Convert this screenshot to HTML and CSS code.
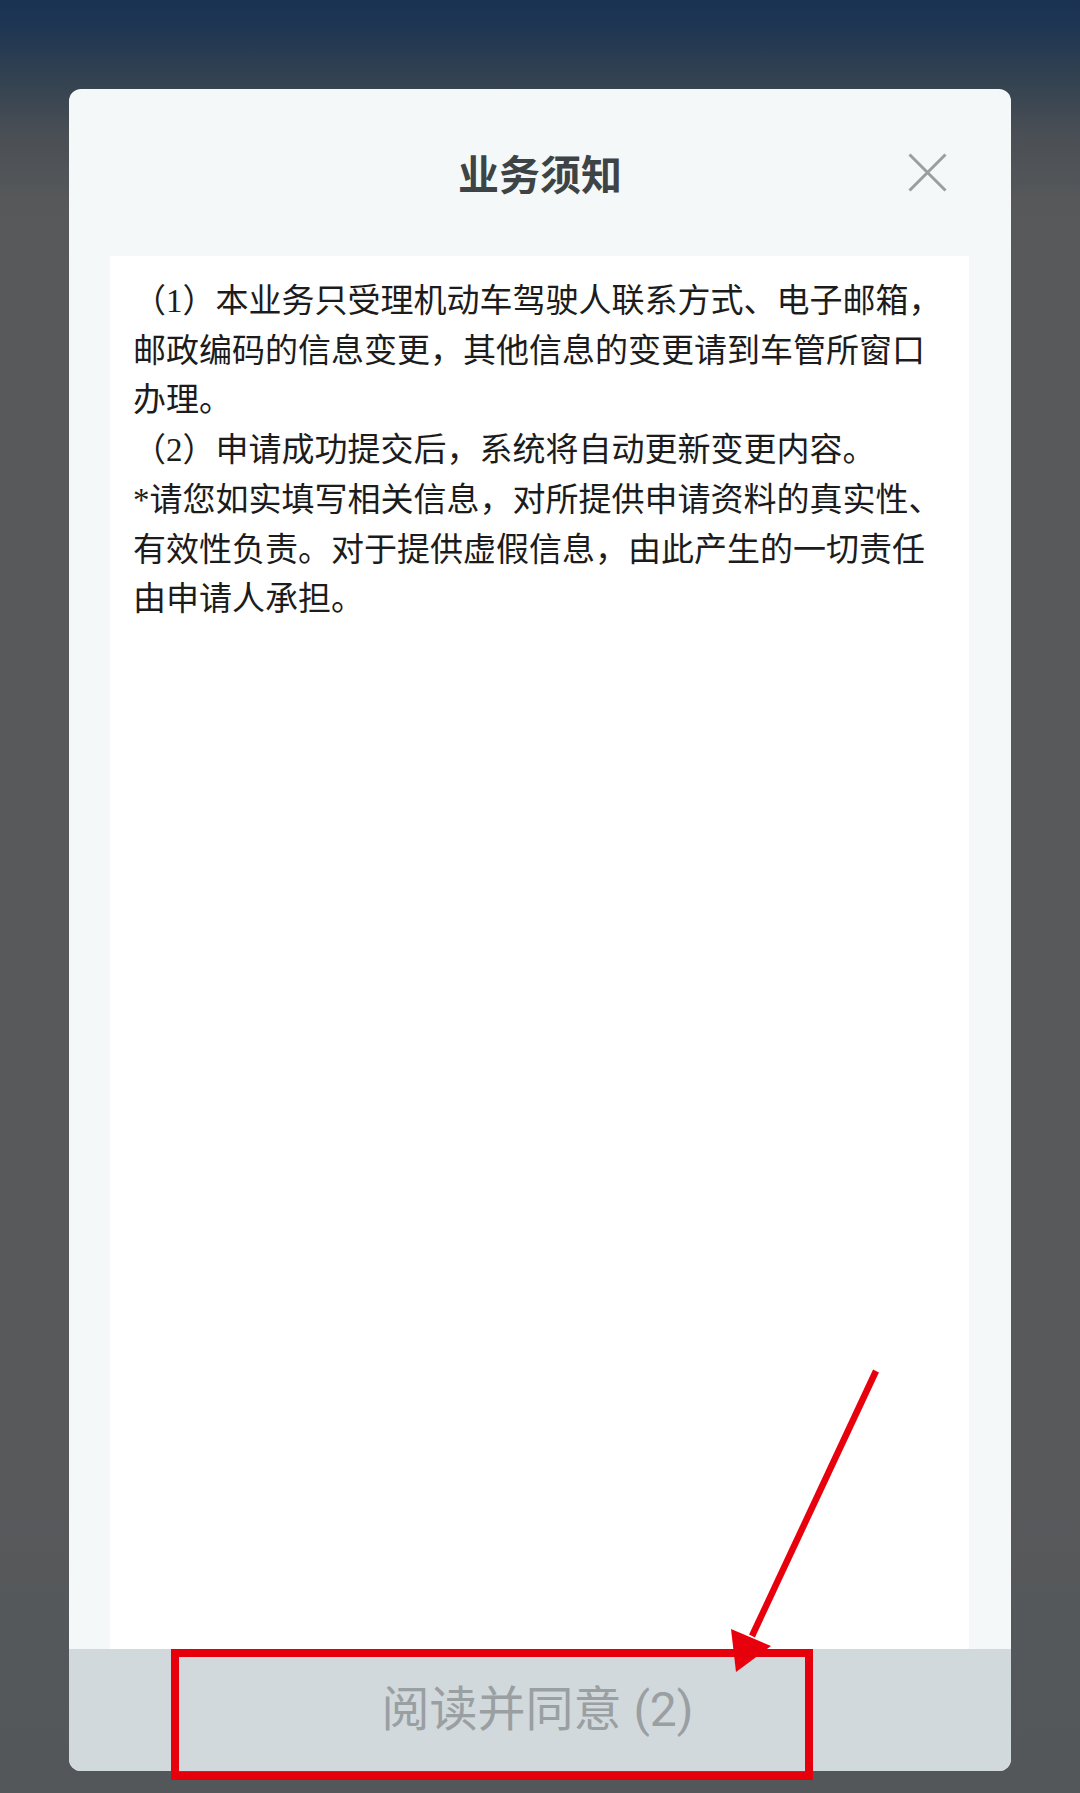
FILE: index.html
```html
<!DOCTYPE html>
<html lang="zh-CN">
<head>
<meta charset="utf-8">
<title>业务须知</title>
<link rel="stylesheet" href="styles.css">
</head>
<body>
<div class="screen">
  <div class="modal">
    <div class="modal-header">
      <span class="spacer"></span>
      <h1 class="title">业务须知</h1>
      <button class="close" aria-label="关闭">
        <svg width="39" height="39" viewBox="0 0 39 39"><path d="M1.5 1.5 L37.5 37.5 M37.5 1.5 L1.5 37.5" stroke="#9a9ea1" stroke-width="3" fill="none"/></svg>
      </button>
    </div>
    <div class="content">
      <p class="notice">（1）本业务只受理机动车驾驶人联系方式、电子邮箱，<br>邮政编码的信息变更，其他信息的变更请到车管所窗口<br>办理。<br>（2）申请成功提交后，系统将自动更新变更内容。<br>*请您如实填写相关信息，对所提供申请资料的真实性、<br>有效性负责。对于提供虚假信息，由此产生的一切责任<br>由申请人承担。</p>
    </div>
    <div class="footer">
      <span class="agree">阅读并同意 (2)</span>
    </div>
  </div>
  <svg class="annotation" width="1080" height="1793" viewBox="0 0 1080 1793">
    <line x1="876" y1="1371" x2="752" y2="1636" stroke="#e8000d" stroke-width="6.5"/>
    <polygon points="731,1629 771,1646 736,1672" fill="#e8000d"/>
    <rect x="175" y="1653" width="634" height="123" fill="none" stroke="#e6000c" stroke-width="8"/>
  </svg>
</div>
</body>
</html>
```
FILE: styles.css
```css
html, body {
  margin: 0;
  padding: 0;
}

body {
  width: 1080px;
  height: 1793px;
  overflow: hidden;
  background: linear-gradient(to bottom,
    #1b3353 0px,
    #1e3553 25px,
    #314150 75px,
    #4a4f55 135px,
    #56585a 200px,
    #58595a 260px,
    #57595b 1500px,
    #53575a 100%);
  font-family: "Noto Sans CJK SC", sans-serif;
}

.screen {
  position: relative;
  width: 1080px;
  height: 1793px;
  padding-top: 89px;
  box-sizing: border-box;
}

.modal {
  width: 942px;
  height: 1682px;
  margin: 0 auto;
  background: #f4f8f9;
  border-radius: 12px;
  overflow: hidden;
  display: flex;
  flex-direction: column;
}

.modal-header {
  height: 167px;
  flex: none;
  display: grid;
  grid-template-columns: 1fr auto 1fr;
  align-items: center;
}

.title {
  margin: 0;
  font-family: "Noto Sans CJK SC", sans-serif;
  font-size: 41px;
  font-weight: 700;
  color: #3e4346;
  line-height: 1;
  letter-spacing: 0;
}

.close {
  justify-self: end;
  margin-right: 64px;
  width: 39px;
  height: 39px;
  padding: 0;
  border: 0;
  background: none;
  display: block;
}

.close svg {
  display: block;
}

.content {
  flex: 1;
  margin: 0 42px 0 41px;
  background: #ffffff;
  padding: 21px 0 0 23px;
}

.notice {
  margin: 0;
  font-family: "Liberation Serif", "Noto Sans CJK SC", serif;
  font-size: 33px;
  line-height: 49.7px;
  color: #1c1c1c;
  white-space: nowrap;
}

.footer {
  height: 122px;
  flex: none;
  background: #d1d9dc;
  display: flex;
  align-items: center;
  justify-content: center;
}

.agree {
  font-family: Roboto, "Noto Sans CJK SC", sans-serif;
  font-size: 48px;
  font-weight: 400;
  color: #9a9fa2;
  line-height: 1;
  margin-right: 5px;
}

.annotation {
  position: absolute;
  top: 0;
  left: 0;
  pointer-events: none;
}
```
